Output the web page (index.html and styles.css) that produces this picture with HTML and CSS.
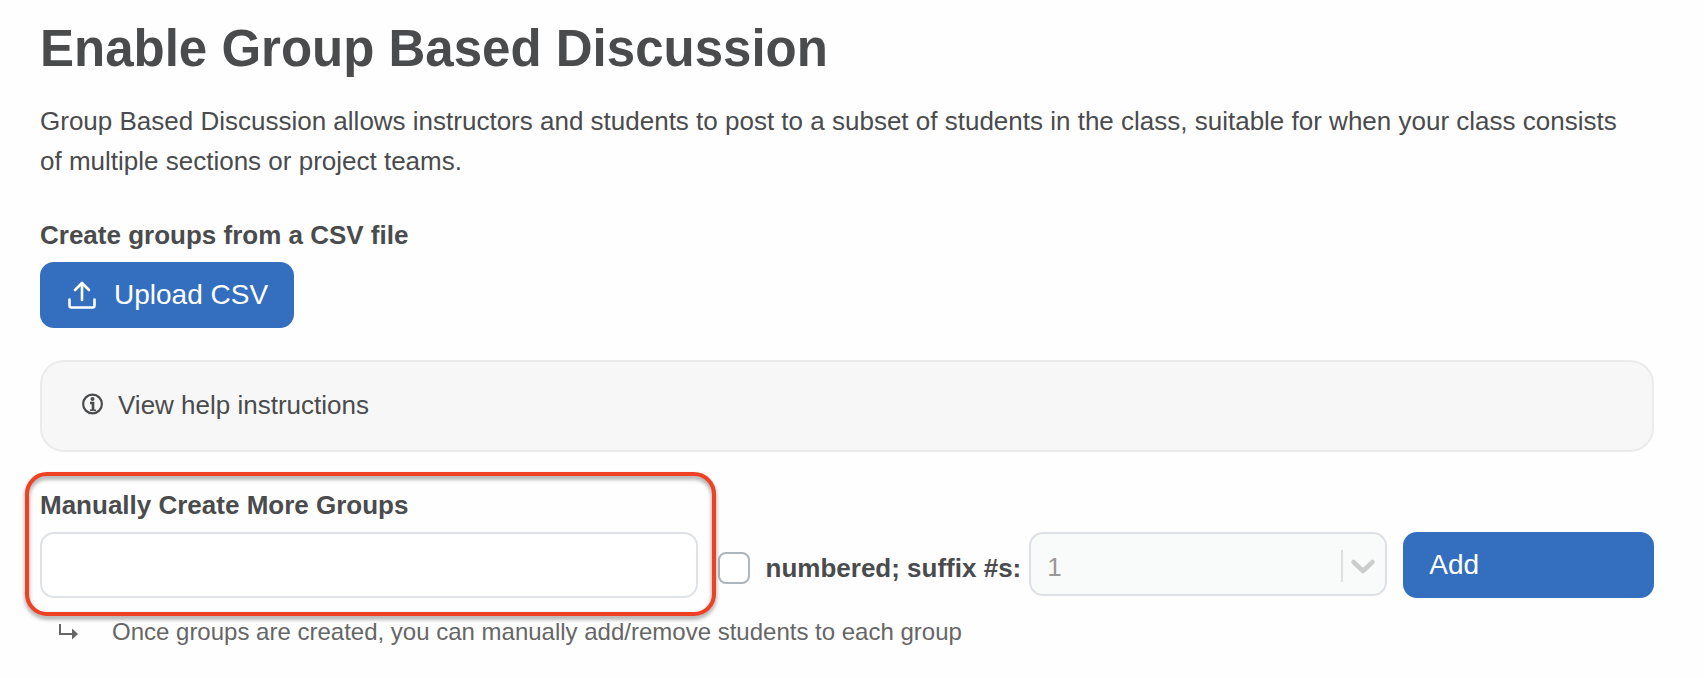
FILE: index.html
```html
<!DOCTYPE html>
<html lang="en">
<head>
    <meta charset="UTF-8">
    <meta name="viewport" content="width=device-width, initial-scale=1.0">
    <title>Enable Group Based Discussion</title>
    <link rel="stylesheet" href="styles.css">
</head>
<body>
    <main class="page">
        <h1>Enable Group Based Discussion</h1>
        <p class="intro">Group Based Discussion allows instructors and students to post to a subset of students in the class, suitable for when your class consists of multiple sections or project teams.</p>

        <h2 class="label">Create groups from a CSV file</h2>
        <button type="button" class="btn btn-upload">
            <svg class="upload-icon" viewBox="0 0 28 28" fill="none" stroke="currentColor" stroke-width="2.6" stroke-linecap="round" stroke-linejoin="round" aria-hidden="true">
                <path d="M1.5 18.5v6a2 2 0 0 0 2 2h21a2 2 0 0 0 2-2v-6"/>
                <path d="M14 19V2M7 9l7-7 7 7"/>
            </svg>
            Upload CSV
        </button>

        <button type="button" class="help">
            <svg class="info-icon" viewBox="0 0 22 22" aria-hidden="true">
                <circle cx="10.5" cy="10" r="9.4" fill="none" stroke="currentColor" stroke-width="2.2"/>
                <circle cx="10.5" cy="5" r="2" fill="currentColor"/>
                <path d="M8 9h3v7" fill="none" stroke="currentColor" stroke-width="2.6"/>
                <path d="M8 16.200h6" stroke="currentColor" stroke-width="1.500"/>
            </svg>
            View help instructions
        </button>

        <form class="create">
            <div class="field">
                <label class="label" for="group-name">Manually Create More Groups</label>
                <input type="text" id="group-name" class="text-input">
            </div>
            <div class="numbered">
                <input type="checkbox" id="numbered" class="checkbox">
                <label class="label" for="numbered">numbered; suffix #s:</label>
            </div>
            <div class="select-wrap">
                <select class="select" aria-label="Number of groups" disabled>
                    <option>1</option>
                </select>
                <svg class="chevron" viewBox="0 0 24 16" fill="none" stroke="currentColor" stroke-width="4.5" stroke-linecap="round" stroke-linejoin="round" aria-hidden="true">
                    <path d="M2.5 3l9.500 9 9.500-9"/>
                </svg>
            </div>
            <button type="button" class="btn btn-add">Add</button>
        </form>

        <p class="note">
            <svg class="arrow-icon" viewBox="0 0 20 18" aria-hidden="true">
                <path d="M2 1v10h12" fill="none" stroke="currentColor" stroke-width="2"/>
                <path d="M14 5.500l6 5.500-6 5.500z" fill="currentColor"/>
            </svg>
            Once groups are created, you can manually add/remove students to each group
        </p>
    </main>
</body>
</html>
```
FILE: styles.css
```css
* {
    box-sizing: border-box;
}
body {
    margin: 0;
    background: #fefefe;
    color: #4a4b4d;
    font-family: "Liberation Sans", Arial, sans-serif;
    font-size: 26px;
    line-height: 40px;
}
button,
input,
select {
    font: inherit;
    color: inherit;
}
svg {
    flex: none;
    overflow: visible;
}
.page {
    padding: 17px 50px 16px 40px;
}
h1 {
    margin: 0 0 20px;
    font-size: 51px;
    line-height: 64px;
}
.intro {
    margin: 0 0 34px;
    padding-right: 12px;
}
.label {
    display: block;
    margin: 0 0 7px;
    font-size: 26px;
    font-weight: bold;
    line-height: 40px;
}
.btn {
    display: flex;
    align-items: center;
    height: 66px;
    padding: 0 26px;
    border: none;
    border-radius: 14px;
    background: #346ebf;
    color: #fff;
    font-size: 28px;
    cursor: pointer;
}
.btn-upload {
    gap: 18px;
    padding-left: 28px;
}
.upload-icon {
    width: 28px;
    height: 28px;
}
.help {
    display: flex;
    align-items: center;
    gap: 14px;
    width: 100%;
    height: 92px;
    margin: 32px 0 33px;
    padding: 0 40px 2px;
    border: 2px solid #ebebeb;
    border-radius: 24px;
    background: #f7f7f7;
    text-align: left;
    cursor: pointer;
}
.info-icon {
    width: 22px;
    height: 22px;
}
.create {
    display: grid;
    grid-template-columns: 661fr auto 376fr 252fr;
    align-items: end;
}
.field {
    position: relative;
}
/* red callout drawn around the group name field */
.field::before {
    content: "";
    position: absolute;
    inset: -13px -18px -18px -15px;
    border: 4px solid #ee4023;
    border-radius: 22px;
    filter: drop-shadow(0 3px 2px rgba(0, 0, 0, 0.4));
    pointer-events: none;
}
.text-input {
    display: block;
    width: 100%;
    height: 66px;
    padding: 0 16px;
    border: 2px solid #dee2e6;
    border-radius: 14px;
    background: #fff;
}
.numbered {
    display: flex;
    align-items: center;
    gap: 16px;
    height: 60px;
    margin: 0 8px 0 20px;
}
.numbered .label {
    margin: 0;
}
.checkbox {
    appearance: none;
    width: 32px;
    height: 32px;
    margin: 0;
    border: 2px solid #adb5bd;
    border-radius: 8px;
    background: #fff;
}
.checkbox:checked {
    background: #346ebf;
}
.select-wrap {
    position: relative;
    height: 66px;
    margin-right: 16px;
}
.select {
    appearance: none;
    display: block;
    width: 100%;
    height: 64px;
    padding: 6px 16px 0;
    border: 2px solid #dee2e6;
    border-radius: 14px;
    background: #f9fbfa;
    color: #999;
    opacity: 1;
}
.select-wrap::after {
    content: "";
    position: absolute;
    top: 18px;
    right: 44px;
    width: 2px;
    height: 32px;
    background: #dfdfdf;
}
.chevron {
    position: absolute;
    top: 27px;
    right: 12px;
    width: 24px;
    height: 16px;
    color: #ccc;
}
.note {
    display: flex;
    align-items: center;
    gap: 34px;
    margin: 14px 18px 0;
    color: #666;
    font-size: 24px;
}
.arrow-icon {
    width: 20px;
    height: 18px;
}
```
